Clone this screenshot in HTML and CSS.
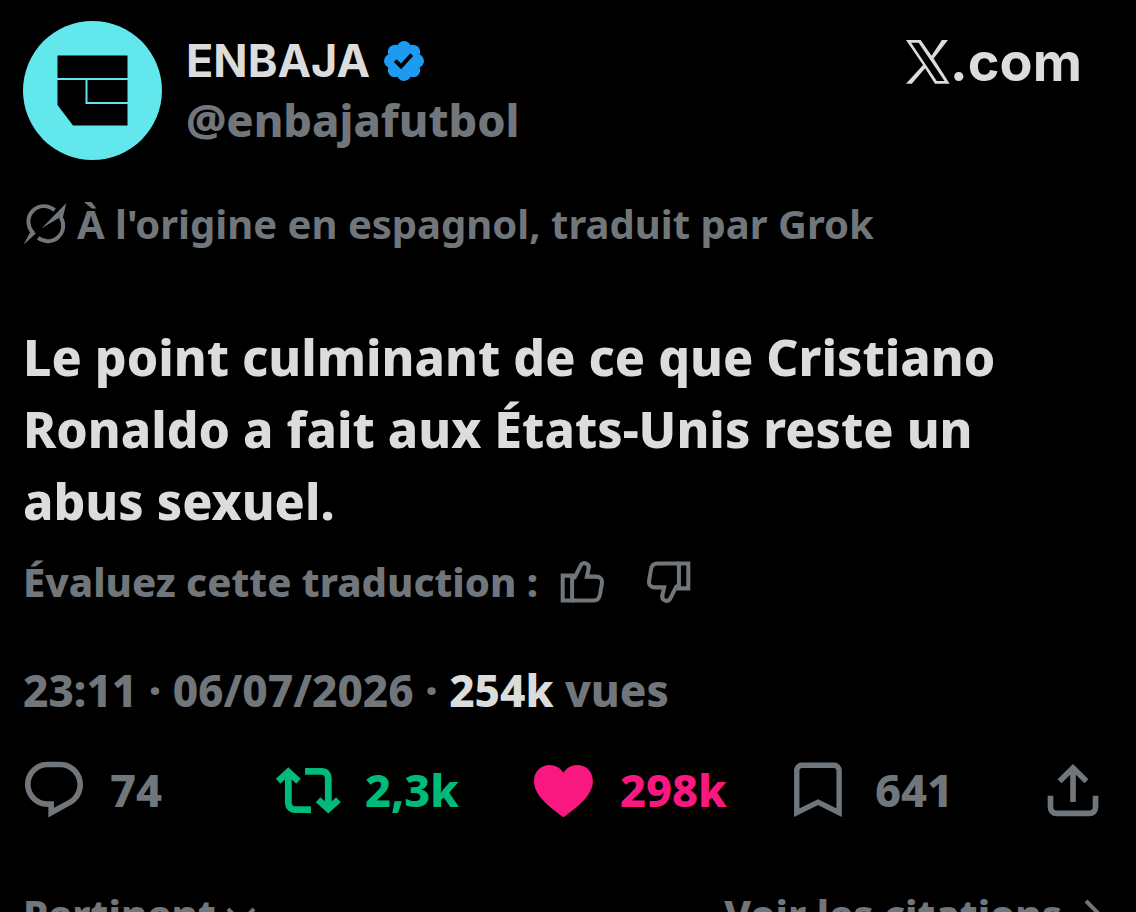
FILE: index.html
```html
<!DOCTYPE html>
<html lang="fr">
<head>
<meta charset="utf-8">
<meta name="viewport" content="width=device-width, initial-scale=1">
<title>ENBAJA sur X</title>
<link rel="stylesheet" href="styles.css">
</head>
<body>
<main class="post">
  <header class="head">
    <svg class="avatar" viewBox="0 0 139 139" role="img" aria-label="ENBAJA">
      <circle cx="69.500" cy="69.500" r="69.500" fill="#62e7ec"/>
      <path d="M34.500 34.500h70v70H50L34.500 84z" fill="#000"/>
      <path d="M34 58h72M63.500 58v24H106" fill="none" stroke="#62e7ec" stroke-width="2"/>
    </svg>
    <div class="who">
      <div class="name-row">
        <h1 class="name">ENBAJA</h1>
        <svg class="badge" viewBox="1.600 1.600 18.800 18.800" role="img" aria-label="Compte certifié"><path fill="#1d9bf0" d="M20.396 11c-.018-.646-.215-1.275-.57-1.816-.354-.54-.852-.972-1.438-1.246.223-.607.27-1.264.14-1.897-.131-.634-.437-1.218-.882-1.687-.47-.445-1.053-.75-1.687-.882-.633-.13-1.29-.083-1.897.14-.273-.587-.704-1.086-1.245-1.44S11.647 1.62 11 1.604c-.646.017-1.273.213-1.813.568s-.969.854-1.24 1.44c-.608-.223-1.267-.272-1.902-.14-.635.13-1.22.436-1.69.882-.445.47-.749 1.055-.878 1.688-.13.633-.08 1.29.144 1.896-.587.274-1.087.705-1.443 1.245-.356.54-.555 1.17-.574 1.817.02.647.218 1.276.574 1.817.356.54.856.972 1.443 1.245-.224.606-.274 1.263-.144 1.896.13.634.433 1.218.877 1.688.47.443 1.054.747 1.687.878.633.132 1.29.084 1.897-.136.274.586.705 1.084 1.246 1.439.54.354 1.17.551 1.816.569.647-.016 1.276-.213 1.817-.567s.972-.854 1.245-1.44c.604.239 1.266.296 1.903.164.636-.132 1.22-.447 1.68-.907.46-.46.776-1.044.908-1.681s.075-1.299-.165-1.903c.586-.274 1.084-.705 1.439-1.246.354-.54.551-1.17.569-1.816zM9.662 14.85l-3.429-3.428 1.293-1.302 2.072 2.072 4.4-4.794 1.347 1.246z"/></svg>
      </div>
      <a class="handle" href="#profil">@enbajafutbol</a>
    </div>
    <a class="site" href="#x" aria-label="X.com">
      <svg class="xlogo" viewBox="0 0 129 129" aria-hidden="true"><path fill="currentColor" fill-rule="evenodd" d="M0 0H43L75 46 105 0H123L81 54 128 128H85L56 83 17 128H0L50 73ZM15 8 90 120H113L37 8Z"/></svg>
      <span>.com</span>
    </a>
  </header>

  <p class="origin">
    <svg class="grok" viewBox="34 36 134 132" aria-hidden="true">
      <path d="M130 60A47 47 0 0 0 66 130M80 144A47 47 0 0 0 149 82" fill="none" stroke="currentColor" stroke-width="12"/>
      <path fill="currentColor" d="M36 165 58 122 74 130ZM166 38 90 116 143 84 155 84Z"/>
    </svg>
    <span>À l'origine en espagnol, traduit par Grok</span>
  </p>

  <p class="body">Le point culminant de ce que Cristiano Ronaldo a fait aux États-Unis reste un abus sexuel.</p>

  <div class="rate">
    <span>Évaluez cette traduction :</span>
    <button class="icon-btn" type="button" aria-label="Bonne traduction">
      <svg class="thumb" viewBox="58 46 134 130" aria-hidden="true"><g fill="none" stroke="currentColor" stroke-width="12"><path d="M66 92H94V166H66Z"/><path d="M94 101 102 97 119 63C122 56 129 53 136 56 143 59 145 65 143 72L138 95H167C178 95 185 103 183 114L177 149C175 160 168 166 158 166H94"/></g></svg>
    </button>
    <button class="icon-btn" type="button" aria-label="Mauvaise traduction">
      <svg class="thumb thumb-down" viewBox="58 46 134 130" aria-hidden="true"><g fill="none" stroke="currentColor" stroke-width="12"><path d="M66 92H94V166H66Z"/><path d="M94 101 102 97 119 63C122 56 129 53 136 56 143 59 145 65 143 72L138 95H167C178 95 185 103 183 114L177 149C175 160 168 166 158 166H94"/></g></svg>
    </button>
  </div>

  <p class="meta">23:11 · 06/07/2026 · <strong>254k</strong> vues</p>

  <div class="actions">
    <button class="action" type="button" aria-label="Répondre, 74">
      <svg viewBox="0 0 24 24" aria-hidden="true"><path fill="currentColor" d="M1.751 10c0-4.420 3.584-8 8.005-8h4.366c4.490 0 8.129 3.640 8.129 8.130 0 2.960-1.607 5.680-4.196 7.110l-8.054 4.460v-3.690h-.067c-4.490.100-8.183-3.510-8.183-8.010zm8.005-6c-3.317 0-6.005 2.690-6.005 6 0 3.370 2.770 6.080 6.138 6.010l.351-.010h1.761v2.300l5.087-2.810c1.951-1.080 3.163-3.130 3.163-5.360 0-3.390-2.744-6.130-6.129-6.130H9.756z"/></svg>
      <span>74</span>
    </button>
    <button class="action repost" type="button" aria-label="Reposter, 2,3k">
      <svg viewBox="0 0 24 24" aria-hidden="true"><path fill="none" stroke="currentColor" stroke-width="2.400" d="M1.100 8.900 4.700 5.600 8.300 8.900M4.700 6V16.400c0 1.600.900 2.500 2.400 2.500H12.700M10.600 5.400H16.400c1.500 0 2.400.900 2.400 2.500V18M15.200 15.400 18.800 18.700 22.400 15.400"/></svg>
      <span>2,3k</span>
    </button>
    <button class="action like" type="button" aria-label="J'aime, 298k">
      <svg viewBox="0 0 24 24" aria-hidden="true"><path fill="currentColor" d="M11.800 21.600C7.150 18.200 1.400 14 1.400 8.900 1.400 5.500 3.900 3.200 6.900 3.200c2 0 3.800 1 4.900 2.700C12.900 4.200 14.700 3.200 16.700 3.200c3.100 0 5.500 2.300 5.500 5.700 0 5.100-5.700 9.300-10.400 12.700z"/></svg>
      <span>298k</span>
    </button>
    <button class="action" type="button" aria-label="Signet, 641">
      <svg viewBox="0 0 24 24" aria-hidden="true"><path fill="none" stroke="currentColor" stroke-width="1.900" d="M4.150 20V5.200c0-1.100.700-1.950 1.900-1.950H17.200c1.200 0 1.900.850 1.900 1.950V20L11.650 16.300z"/></svg>
      <span>641</span>
    </button>
    <button class="action" type="button" aria-label="Partager">
      <svg viewBox="0 0 24 24" aria-hidden="true"><path fill="none" stroke="currentColor" stroke-width="2" d="M11.650 16.200V4M6.900 8.900 11.650 4.200 16.400 8.900M3.700 14v4c0 1.400.900 2.250 2.200 2.250h11.500c1.300 0 2.200-.850 2.200-2.250v-4"/></svg>
    </button>
  </div>

  <footer class="foot">
    <button class="foot-btn" type="button"><span>Pertinent</span><svg class="chev" viewBox="0 0 30 30" aria-hidden="true"><path fill="none" stroke="currentColor" stroke-width="4" d="M2 10 15 23 28 10"/></svg></button>
    <a class="foot-btn cites" href="#citations"><span>Voir les citations</span><svg class="chev" viewBox="0 0 30 30" aria-hidden="true"><path fill="none" stroke="currentColor" stroke-width="4" d="M4 2 17 15 4 28"/></svg></a>
  </footer>
</main>
</body>
</html>
```
FILE: styles.css
```css
* {
  box-sizing: border-box;
}

body {
  margin: 0;
  height: 100vh;
  overflow: hidden;
  background: #000;
  color: #71767b;
  font-family: "Noto Sans", "Open Sans", sans-serif;
  font-weight: 800;
}

h1,
p {
  margin: 0;
}

a {
  color: inherit;
  text-decoration: none;
}

button {
  padding: 0;
  border: 0;
  background: none;
  color: inherit;
  font: inherit;
  cursor: pointer;
}

svg {
  display: block;
  flex: none;
}

.post {
  padding: 21px 24px 0 23px;
}

.head {
  display: flex;
  align-items: flex-start;
  gap: 24px;
}

.avatar {
  width: 139px;
  height: 139px;
}

.who {
  flex: 1;
  padding-top: 10px;
}

.name-row {
  display: flex;
  align-items: center;
  gap: 14px;
}

.name {
  color: #dcdcdc;
  font-family: Inter, sans-serif;
  font-size: 45px;
  font-weight: 700;
  line-height: 60px;
}

.badge {
  width: 40px;
  height: 40px;
}

.handle {
  display: block;
  font-size: 45px;
  line-height: 58px;
}

.site {
  display: flex;
  align-items: center;
  margin-right: 30px;
  padding-top: 8px;
  color: #dcdcdc;
  font-family: Inter, sans-serif;
  font-size: 54px;
  font-weight: 700;
  line-height: 66px;
}

.xlogo {
  width: 44px;
  height: 44px;
}

.origin {
  display: flex;
  align-items: center;
  gap: 10px;
  margin-top: 34px;
  font-size: 40px;
  font-weight: 700;
  line-height: 60px;
}

.grok {
  width: 44px;
  height: 44px;
}

.body {
  max-width: 1040px;
  margin-top: 67px;
  color: #dcdcdc;
  font-size: 50px;
  line-height: 72px;
}

.rate {
  display: flex;
  align-items: center;
  margin-top: 15px;
  font-size: 40px;
  line-height: 60px;
}

.icon-btn {
  margin-left: 22px;
}

.icon-btn + .icon-btn {
  margin-left: 41px;
}

.thumb {
  width: 45px;
  height: 44px;
}

.thumb-down {
  transform: rotate(180deg);
}

.meta {
  margin-top: 48px;
  font-size: 44px;
  line-height: 60px;
}

.meta strong {
  color: #dcdcdc;
  font-weight: inherit;
}

.actions {
  display: grid;
  grid-template-columns: repeat(4, 1fr) auto;
  margin: 36px 4px 0 -3px;
  font-size: 45px;
  line-height: 68px;
}

.action {
  display: flex;
  align-items: center;
  gap: 22px;
}

.action svg {
  width: 68px;
  height: 68px;
}

.repost {
  color: #00ba7c;
}

.like {
  color: #f91880;
}

.foot {
  display: flex;
  justify-content: space-between;
  margin-top: 60px;
  font-size: 40px;
  line-height: 60px;
}

.foot-btn {
  display: flex;
  align-items: center;
  gap: 10px;
}

.cites {
  gap: 20px;
}

.chev {
  width: 30px;
  height: 30px;
}
```
